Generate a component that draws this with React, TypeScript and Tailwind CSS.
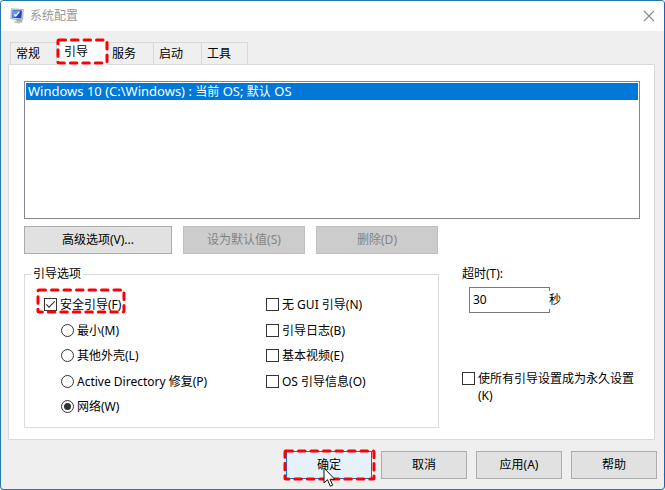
import { useState } from 'react';
import type { ReactNode } from 'react';
import clsx from 'clsx';

const tabs = [
    { name: '常规', width: 'w-[47px]' },
    { name: '引导', width: 'w-[50px]' },
    { name: '服务', width: 'w-[47px]' },
    { name: '启动', width: 'w-[48px]' },
    { name: '工具', width: 'w-[46px]' },
];

const modes = ['最小(M)', '其他外壳(L)', 'Active Directory 修复(P)', '网络(W)'];
const flags = ['无 GUI 引导(N)', '引导日志(B)', '基本视频(E)', 'OS 引导信息(O)'];

// Red dashed frame drawn over the element that it marks
function Marker({ className }: { className: string }) {
    return (
        <svg className={clsx('absolute pointer-events-none overflow-visible', className)} aria-hidden="true">
            <rect
                width="100%"
                height="100%"
                rx="1"
                fill="none"
                stroke="#fb0007"
                strokeWidth="3"
                strokeDasharray="6.500 6"
                strokeLinecap="round"
            />
        </svg>
    );
}

function Check({ label, defaultChecked }: { label: string; defaultChecked?: boolean }) {
    return (
        <label className="flex items-start gap-[3px] leading-[17px]">
            <span className="relative mt-[2px] size-[13px] shrink-0">
                <input
                    type="checkbox"
                    defaultChecked={defaultChecked}
                    className="peer block size-[13px] appearance-none border border-[#333] bg-white"
                />
                <svg className="absolute inset-0 hidden size-[13px] peer-checked:block" viewBox="0 0 13 13" aria-hidden="true">
                    <path d="M2.300 6.300 5 9.200 10.800 3.300" fill="none" stroke="#333" strokeWidth="1.100" />
                </svg>
            </span>
            <span>{label}</span>
        </label>
    );
}

function Radio({ label, defaultChecked }: { label: string; defaultChecked?: boolean }) {
    return (
        <label className="flex items-start gap-[3px] leading-[17px]">
            <span className="relative mt-[2px] size-[13px] shrink-0">
                <input
                    type="radio"
                    name="mode"
                    defaultChecked={defaultChecked}
                    className="peer block size-[13px] appearance-none rounded-full border border-[#333] bg-white"
                />
                <span className="absolute inset-[3px] hidden rounded-full bg-[#333] peer-checked:block" />
            </span>
            <span>{label}</span>
        </label>
    );
}

function Button({ children, className, disabled }: { children: ReactNode; className: string; disabled?: boolean }) {
    return (
        <button
            disabled={disabled}
            className={clsx(
                'h-7 border text-center',
                disabled ? 'border-[#bfbfbf] bg-[#ccc] text-[#838383]' : 'bg-[#e1e1e1]',
                className
            )}
        >
            {children}
        </button>
    );
}

function AppIcon() {
    return (
        <svg width="15" height="16" viewBox="0 0 15 16" aria-hidden="true">
            <ellipse cx="8.500" cy="13.800" rx="4" ry="1.700" fill="#c4c6c8" />
            <path d="M6 10h5l1 3.500H7z" fill="#a9adb2" />
            <path d="M1.500 .8 13.300 1.500 12.600 12 .8 10.800z" fill="#dfe3ea" stroke="#8b94a8" strokeWidth=".7" />
            <path d="M2.700 2 12 2.600 11.400 10.600 2.100 9.700z" fill="#2444b8" />
            <path d="M3 2.400 9 2.800 5 9.600 2.500 9.300z" fill="#5c9cf0" />
            <path d="M4.300 6.300 5.800 8 9.500 3.500" fill="none" stroke="#f2f8ff" strokeWidth="1.300" />
        </svg>
    );
}

export default function App() {
    const [active, setActive] = useState('引导');
    const [timeout, setTimeoutValue] = useState('30');

    return (
        <main className="flex min-h-screen flex-col overflow-hidden rounded-sm border border-[#2878a8] border-r-[#1f62a8] bg-[#efefef] font-['Noto_Sans','Noto_Sans_CJK_SC',sans-serif] text-xs text-black">
            <header className="flex h-[30px] items-center bg-white px-[9px]">
                <AppIcon />
                <h1 className="ml-[5px] flex-1 text-[#999]">系统配置</h1>
                <button aria-label="关闭">
                    <svg width="12" height="12" viewBox="0 0 12 12" aria-hidden="true">
                        <path d="M1 1 11 11M11 1 1 11" stroke="#8a8a8a" strokeWidth="1.100" />
                    </svg>
                </button>
            </header>

            <div className="pt-[9px] pr-[9px] pl-[7px]">
                <nav className="flex items-end pl-[2px]" role="tablist">
                    {tabs.map((tab) => (
                        <button
                            key={tab.name}
                            role="tab"
                            aria-selected={tab.name === active}
                            onClick={() => setActive(tab.name)}
                            className={clsx(
                                'relative text-left',
                                tab.width,
                                tab.name === active
                                    ? 'z-10 -mb-px h-[25px] bg-white pb-[2px] pl-[7px]'
                                    : 'h-[22px] border-t border-r border-[#d9d9d9] pl-[5px] first:border-l'
                            )}
                        >
                            {tab.name}
                            {tab.name === active && <Marker className="top-0 left-px h-[23px] w-[49px]" />}
                        </button>
                    ))}
                </nav>

                <section className="border border-[#d9d9d9] bg-white px-[15px] pt-4 pb-[11px]">
                    <ul className="-mr-px h-[138px] border border-[#828790] p-px" role="listbox" aria-label="引导项">
                        <li className="h-[17px] bg-[#0078d7] pl-[2px] text-[13px] leading-[17px] text-white" role="option" aria-selected="true">
                            Windows 10 (C:\Windows) : <span className="text-xs">当前</span> OS; <span className="text-xs">默认</span> OS
                        </li>
                    </ul>

                    <div className="mt-[7px] flex gap-[11px]">
                        <Button className="w-[148px] border-[#adadad]">高级选项(V)...</Button>
                        <Button className="w-[122px]" disabled>设为默认值(S)</Button>
                        <Button className="w-[122px]" disabled>删除(D)</Button>
                    </div>

                    <div className="mt-[11px] flex">
                        <fieldset className="w-[415px] shrink-0 border border-[#dcdcdc] px-[19px] pb-[12px]">
                            <legend className="-ml-[13px] px-[2px] leading-[18px]">引导选项</legend>
                            <div className="mt-[13px] flex">
                                <div className="flex h-[119px] w-[222px] flex-col justify-between">
                                    <div className="relative">
                                        <Check label="安全引导(F)" defaultChecked />
                                        <Marker className="-top-[6px] -left-[6px] h-[22px] w-[86px]" />
                                    </div>
                                    {modes.map((mode) => (
                                        <div key={mode} className="pl-[17px]">
                                            <Radio label={mode} defaultChecked={mode === '网络(W)'} />
                                        </div>
                                    ))}
                                </div>
                                <div className="flex h-[94px] flex-col justify-between">
                                    {flags.map((flag) => (
                                        <Check key={flag} label={flag} />
                                    ))}
                                </div>
                            </div>
                        </fieldset>

                        <div className="ml-[23px] flex-1">
                            <label htmlFor="timeout" className="block leading-[18px]">超时(T):</label>
                            <div className="mt-[4px] flex items-center pl-[7px]">
                                <input
                                    id="timeout"
                                    value={timeout}
                                    onChange={(e) => setTimeoutValue(e.target.value)}
                                    className="h-[26px] w-[81px] border border-[#7a7a7a] bg-white pb-[2px] pl-[3px]"
                                />
                                <span className="relative -ml-px bg-white leading-[18px]">秒</span>
                            </div>
                            <div className="mt-[57px]">
                                <Check label="使所有引导设置成为永久设置(K)" />
                            </div>
                        </div>
                    </div>
                </section>
            </div>

            <footer className="mt-[11px] flex justify-end gap-[9px] pr-[7px]">
                <div className="relative">
                    <Button className="w-[86px] border-[#0078d7] bg-[#e5f1fb]!">确定</Button>
                    <Marker className="top-0 -left-px h-[28px] w-[89px]" />
                    <svg className="absolute top-[16px] left-[37px]" width="13" height="21" viewBox="0 0 13 21" aria-hidden="true">
                        <path d="M1 1v15l3.500-3.300 2.800 6.500 2.400-1-2.700-5.900h4.800z" fill="#fff" stroke="#111" strokeWidth="1" />
                    </svg>
                </div>
                <Button className="w-[86px] border-[#adadad]">取消</Button>
                <Button className="w-[86px] border-[#adadad]">应用(A)</Button>
                <Button className="w-[86px] border-[#adadad]">帮助</Button>
            </footer>
        </main>
    );
}
